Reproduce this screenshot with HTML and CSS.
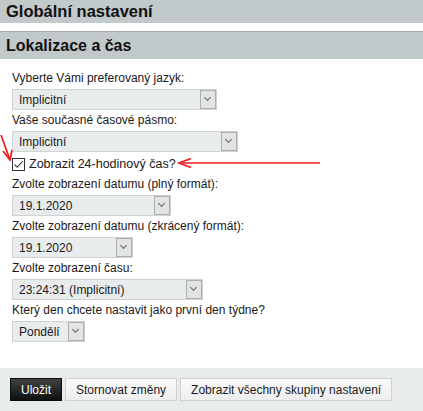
FILE: index.html
```html
<!DOCTYPE html>
<html>
<head>
    <title>Globální nastavení</title>
    <link rel="stylesheet" href="styles.css">
</head>
<body>
    <div class="page-title">Globální nastavení</div>
    <div class="section-title">Lokalizace a čas</div>

    <div class="settings">
        <div class="field">
            <label>Vyberte Vámi preferovaný jazyk:</label>
            <div class="select w-lang"><span>Implicitní</span><i class="arrow"></i></div>
        </div>
        <div class="field">
            <label>Vaše současné časové pásmo:</label>
            <div class="select w-zone"><span>Implicitní</span><i class="arrow"></i></div>
        </div>
        <div class="check-row">
            <span class="checkbox">
                <svg width="11" height="11" viewBox="0 0 11 11"><path d="M1.5 5.5 L4.2 8.2 L9.8 2.2" fill="none" stroke="#444" stroke-width="1.1"/></svg>
            </span>
            <span>Zobrazit 24-hodinový čas?</span>
        </div>
        <div class="field">
            <label>Zvolte zobrazení datumu (plný formát):</label>
            <div class="select w-long"><span>19.1.2020</span><i class="arrow"></i></div>
        </div>
        <div class="field">
            <label>Zvolte zobrazení datumu (zkrácený formát):</label>
            <div class="select w-short"><span>19.1.2020</span><i class="arrow"></i></div>
        </div>
        <div class="field">
            <label>Zvolte zobrazení času:</label>
            <div class="select w-time"><span>23:24:31 (Implicitní)</span><i class="arrow"></i></div>
        </div>
        <div class="field">
            <label>Který den chcete nastavit jako první den týdne?</label>
            <div class="select w-day"><span>Pondělí</span><i class="arrow"></i></div>
        </div>

        <!-- red annotation arrows drawn over the form -->
        <svg class="marks" width="423" height="45" viewBox="0 0 423 45">
            <g stroke="#ec1c1c" stroke-width="1.7" fill="none">
                <path d="M1 5 L10 30"/>
                <path d="M3 21 L10 30 L12 20"/>
                <path d="M320 33 L180 33"/>
                <path d="M191 28.5 L179 33 L191 37.5"/>
            </g>
        </svg>
    </div>

    <div class="actions">
        <button class="btn btn-dark">Uložit</button>
        <button class="btn">Stornovat změny</button>
        <button class="btn">Zobrazit všechny skupiny nastavení</button>
    </div>
</body>
</html>
```

FILE: styles.css
```css
body {
    margin: 0;
    font-family: "Liberation Sans", Arial, sans-serif;
    font-size: 12px;
    color: #1a1a1a;
    background-color: #fff;
    width: 423px;
    height: 411px;
    overflow: hidden;
}

.page-title {
    background-color: #c2c9cb;
    height: 23px;
    line-height: 22px;
    padding-left: 6px;
    font-weight: bold;
    font-size: 16.5px;
    color: #111;
    margin-bottom: 8px;
}

.section-title {
    background-color: #c2c9cb;
    border-top: 1px solid #a4aaac;
    height: 27px;
    line-height: 27px;
    padding-left: 6px;
    font-weight: bold;
    font-size: 16px;
    color: #111;
}

.settings {
    position: relative;
    padding: 10px 0 0 12px;
    height: 299px;
}

.field label {
    display: block;
    height: 18px;
    line-height: 18px;
    margin-bottom: 2px;
}

.field {
    margin-bottom: 1px;
}

.select {
    display: flex;
    align-items: center;
    justify-content: space-between;
    box-sizing: border-box;
    height: 21px;
    background-color: #e9eced;
    border: 1px solid #cfd2d3;
    padding: 0 0 0 6px;
}

.arrow {
    display: block;
    box-sizing: border-box;
    width: 16px;
    height: 19px;
    border: 1px solid #acaeaf;
    background-color: #e2e4e5;
    position: relative;
}

.arrow:after {
    content: "";
    position: absolute;
    left: 4px;
    top: 4px;
    width: 4px;
    height: 4px;
    border-right: 1px solid #666;
    border-bottom: 1px solid #666;
    transform: rotate(45deg);
}

.w-lang { width: 205px; }
.w-zone { width: 226px; }
.w-long { width: 159px; }
.w-short { width: 121px; }
.w-time { width: 191px; }
.w-day { width: 73px; }

.check-row {
    display: flex;
    align-items: center;
    gap: 4px;
    height: 22px;
    font-size: 12.5px;
}

.checkbox {
    display: flex;
    align-items: center;
    justify-content: center;
    box-sizing: border-box;
    width: 13px;
    height: 13px;
    border: 1px solid #333;
    background-color: #fff;
}

.marks {
    position: absolute;
    left: 0;
    top: 71px;
}

.actions {
    background-color: #e9ecec;
    display: flex;
    gap: 3px;
    padding: 10px;
    height: 43px;
    box-sizing: border-box;
}

.btn {
    font-family: "Liberation Sans", Arial, sans-serif;
    font-size: 12px;
    height: 23px;
    padding: 0 10px;
    white-space: nowrap;
    border: 1px solid #cfd1d2;
    background: linear-gradient(#fafafa, #eeeeee);
    color: #1a1a1a;
}

.btn-dark {
    background: linear-gradient(#404040, #101010);
    border-color: #0c0c0c;
    color: #fff;
}
```
